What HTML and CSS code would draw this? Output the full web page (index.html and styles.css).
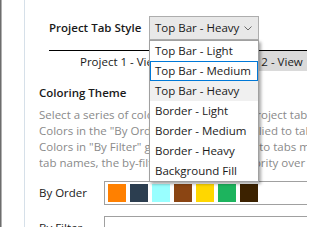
FILE: index.html
```html
<!DOCTYPE html>
<html>
<head>
<meta charset="utf-8">
<link rel="stylesheet" href="styles.css">
</head>
<body>
<div class="window">
  <div class="rail"></div>
  <div class="content">
    <div class="style-row">
      <span class="style-label">Project Tab Style</span>
      <div class="select">
        <span class="select-value">Top Bar - Heavy</span>
        <svg class="chevron" width="8" height="5" viewBox="0 0 8 5"><polyline points="0.5,0.5 4,4 7.5,0.5" fill="none" stroke="#6a6a6a" stroke-width="1"/></svg>
      </div>
    </div>
    <div class="tabs-preview">
      <div class="tab">Project 1 - View</div>
      <div class="tab tab-inactive">Project 2 - View</div>
    </div>
    <section class="theme">
      <h3 class="theme-title">Coloring Theme</h3>
      <div class="desc">
        <div class="desc-line">Select a series of colors to be made for project tabs.</div>
        <div class="desc-line">Colors in the "By Order" group, to be applied to tabs in order.</div>
        <div class="desc-line">Colors in "By Filter" group will be applied to tabs matching</div>
        <div class="desc-line">tab names, the by-filter colors obtain priority over</div>
      </div>
      <div class="color-row">
        <span class="color-label">By Order</span>
        <div class="swatches">
          <span class="swatch" style="background:#ff8000"></span>
          <span class="swatch" style="background:#2c3e50"></span>
          <span class="swatch" style="background:#99ffff"></span>
          <span class="swatch" style="background:#8b4513"></span>
          <span class="swatch" style="background:#ffd700"></span>
          <span class="swatch" style="background:#1db45e"></span>
          <span class="swatch" style="background:#3c2200"></span>
        </div>
      </div>
      <div class="color-row">
        <span class="color-label">By Filter</span>
        <div class="swatches"></div>
      </div>
    </section>
  </div>
  <ul class="dropdown">
    <li class="option">Top Bar - Light</li>
    <li class="option option-focus">Top Bar - Medium</li>
    <li class="option option-selected">Top Bar - Heavy</li>
    <li class="option">Border - Light</li>
    <li class="option">Border - Medium</li>
    <li class="option">Border - Heavy</li>
    <li class="option">Background Fill</li>
  </ul>
</div>
</body>
</html>
```
FILE: styles.css
```css
html, body {
  margin: 0;
  padding: 0;
  background: #ffffff;
}
body {
  width: 307px;
  height: 227px;
  overflow: hidden;
  font-family: "Open Sans", "Noto Sans", sans-serif;
  font-size: 11.5px;
  color: #1a1a1a;
}
.window {
  position: relative;
  display: flex;
  width: 307px;
  height: 227px;
  overflow: hidden;
}
.rail {
  flex: 0 0 23px;
  border-left: 1px solid #6d6d6d;
  box-shadow: inset 1px 0 0 #b0b0b0;
  border-right: 1px solid #d6e0e9;
}
.content {
  flex: 1 1 auto;
  min-width: 0;
  overflow: hidden;
}
.style-row {
  display: flex;
  align-items: center;
  padding: 16px 0 0 24px;
  height: 24px;
}
.style-label {
  width: 100px;
  font-weight: 600;
  line-height: 16px;
}
.select {
  box-sizing: border-box;
  width: 110px;
  height: 24px;
  border: 1px solid #adadad;
  background: #e8e8e8;
  display: flex;
  align-items: center;
  justify-content: space-between;
  padding: 0 6px 0 5px;
}
.select-value {
  line-height: 16px;
  white-space: nowrap;
}
.chevron {
  display: block;
}
.tabs-preview {
  margin: 10px 0 0 24px;
  border-top: 1px solid #000000;
  display: flex;
  height: 20px;
  white-space: nowrap;
}
.tab {
  padding: 1px 28px 0 31px;
  line-height: 20px;
}
.tab-inactive {
  background: #dadada;
}
.theme {
  padding: 14px 0 0 14px;
}
.theme-title {
  margin: 0;
  font-size: 11.5px;
  font-weight: 600;
  line-height: 16px;
}
.desc {
  margin-top: 6px;
  color: #8a8a8a;
  line-height: 16px;
  white-space: nowrap;
  overflow: hidden;
}
.color-row {
  display: flex;
  align-items: center;
  margin-top: 10px;
}
.color-row + .color-row {
  margin-top: 11px;
}
.color-label {
  width: 65px;
  line-height: 16px;
}
.swatches {
  flex: 1 1 auto;
  display: flex;
  gap: 4px;
  height: 18px;
  padding: 2px 3px;
  border: 1px solid #a0a0a0;
  border-right: none;
}
.swatch {
  width: 18px;
  height: 18px;
}
.dropdown {
  position: absolute;
  left: 149px;
  top: 40px;
  width: 108px;
  margin: 0;
  padding: 0;
  list-style: none;
  background: #ffffff;
  border: 1px solid #a0a0a0;
  box-shadow: 2px 2px 3px rgba(0, 0, 0, 0.35);
}
.option {
  box-sizing: border-box;
  height: 20px;
  line-height: 18px;
  padding: 1px 5px;
  white-space: nowrap;
}
.option-focus {
  border: 1px solid #0078d7;
  padding: 0 4px;
}
.option-selected {
  background: #f0f0f0;
}
```
